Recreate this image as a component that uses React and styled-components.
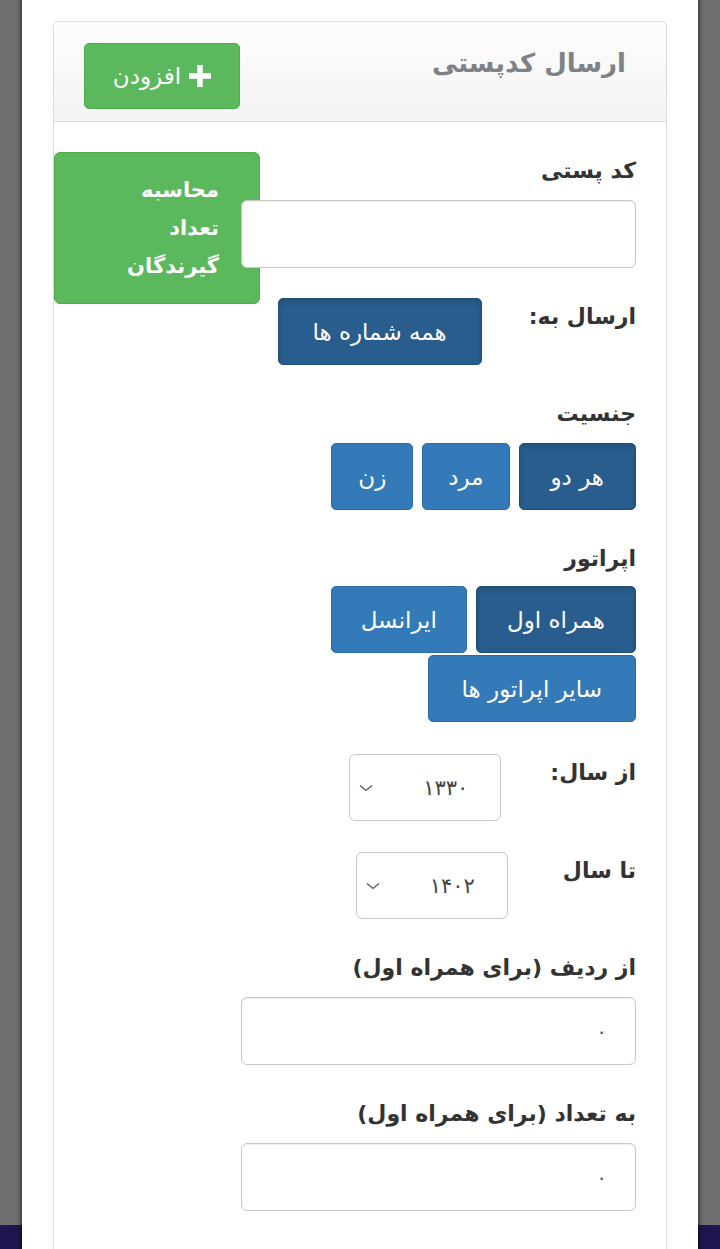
import React from "react";
import styled, { createGlobalStyle } from "styled-components";

const Global = createGlobalStyle`
  html, body { margin: 0; padding: 0; height: 1249px; overflow: hidden; }
  body {
    font-family: "DejaVu Sans", "Noto Sans", sans-serif;
    direction: rtl;
    background: linear-gradient(to bottom, #6f6f6f 0, #6f6f6f 1225px, #1f1650 1225px);
  }
  * { box-sizing: border-box; }
`;

const Backdrop = styled.div`
  height: 1249px;
  padding: 0 22px;
  display: flex;
`;

const Modal = styled.div`
  flex: 1;
  background: #fff;
  box-shadow: 0 0 4px 2px rgba(0, 0, 0, 0.45);
  padding: 21px 31px 0;
  overflow: hidden;
`;

const Panel = styled.section`
  border: 1px solid #ddd;
  border-bottom: none;
  border-radius: 5px 5px 0 0;
  min-height: 1300px;
`;

const PanelHeading = styled.header`
  height: 100px;
  display: flex;
  align-items: center;
  justify-content: space-between;
  padding: 0 40px 0 30px;
  background: linear-gradient(to bottom, #fdfdfd 0, #f4f4f4 100%);
  border-bottom: 1px solid #ddd;
  border-radius: 5px 5px 0 0;
`;

const Title = styled.h3`
  margin: 0 0 18px;
  font-size: 26px;
  font-weight: bold;
  color: #7f8285;
`;

const Btn = styled.button`
  font-family: inherit;
  direction: rtl;
  height: 67px;
  padding: 0 ${(p) => p.$px ?? 26}px;
  border-radius: 5px;
  font-size: 23px;
  color: #fff;
  cursor: pointer;
  display: inline-flex;
  align-items: center;
  justify-content: center;
  gap: 8px;
  white-space: nowrap;
  background: ${(p) => (p.$variant === "success" ? "#5cb85c" : p.$active ? "#295d8d" : "#347ab8")};
  border: 1px solid ${(p) => (p.$variant === "success" ? "#4cae4c" : p.$active ? "#204d74" : "#2e6da4")};
  box-shadow: ${(p) => (p.$active ? "inset 0 3px 5px rgba(0,0,0,0.125)" : "none")};
`;

const AddBtn = styled(Btn)`
  width: 156px;
  height: 66px;
  padding: 0;
  margin-top: 8px;
  font-size: 23px;
`;

const PanelBody = styled.div`
  position: relative;
  padding: 30px 30px 30px;
`;

const CalcBtn = styled.button`
  position: absolute;
  left: 0;
  top: 30px;
  width: 206px;
  height: 152px;
  background: #5cb85c;
  border: 1px solid #4cae4c;
  border-radius: 6px;
  color: #fff;
  font-family: inherit;
  font-weight: bold;
  font-size: 21px;
  line-height: 38px;
  text-align: right;
  padding: 0 40px 0 20px;
  direction: rtl;
  z-index: 0;
`;

const Group = styled.div`
  margin-bottom: ${(p) => p.$mb ?? 30}px;
  position: relative;
  z-index: 1;
`;

const Label = styled.label`
  display: block;
  font-weight: bold;
  font-size: 22px;
  line-height: 38px;
  color: #333;
  margin-bottom: ${(p) => p.$mb ?? 10}px;
`;

const TextInput = styled.input`
  display: block;
  width: 395px;
  height: 68px;
  border: 1.5px solid #c8c8c8;
  border-radius: 6px;
  background: #fff;
  box-shadow: inset 0 1px 1px rgba(0, 0, 0, 0.075);
  font-family: inherit;
  font-size: 20px;
  color: #555;
  padding: 0 28px;
  direction: rtl;
  text-align: right;
  outline: none;
`;

const InlineRow = styled.div`
  display: flex;
  align-items: flex-start;
  gap: ${(p) => p.$gap ?? 50}px;
`;

const InlineLabel = styled(Label)`
  margin: 0;
  flex: none;
`;

const ButtonWrap = styled.div`
  display: flex;
  flex-wrap: wrap;
  column-gap: 9px;
  row-gap: 2px;
  max-width: 320px;
`;

const SelectBox = styled.div`
  position: relative;
  width: 152px;
  height: 67px;
`;

const Select = styled.select`
  appearance: none;
  -webkit-appearance: none;
  width: 100%;
  height: 100%;
  border: 1.5px solid #c8c8c8;
  border-radius: 6px;
  background: #fff;
  font-family: inherit;
  font-size: 21px;
  color: #444;
  padding: 0 32px 0 40px;
  direction: rtl;
  outline: none;
`;

const Chevron = styled.svg`
  position: absolute;
  left: 9px;
  top: 50%;
  transform: translateY(-50%);
  pointer-events: none;
`;

function YearSelect({ value }) {
  return (
    <SelectBox>
      <Select defaultValue={value}>
        <option value={value}>{value}</option>
      </Select>
      <Chevron width="16" height="10" viewBox="0 0 16 10">
        <path d="M2 2.5 L8 7.5 L14 2.5" fill="none" stroke="#555" strokeWidth="1.3" />
      </Chevron>
    </SelectBox>
  );
}

function PlusIcon() {
  return (
    <svg width="22" height="22" viewBox="0 0 22 22">
      <rect x="8.25" y="0" width="5.5" height="22" fill="#fff" />
      <rect x="0" y="8.25" width="22" height="5.5" fill="#fff" />
    </svg>
  );
}

export default function App() {
  return (
    <>
      <Global />
      <Backdrop>
        <Modal>
          <Panel>
            <PanelHeading>
              <Title>ارسال کدپستی</Title>
              <AddBtn $variant="success">
                <PlusIcon />
                <span>افزودن</span>
              </AddBtn>
            </PanelHeading>
            <PanelBody>
              <CalcBtn>
                محاسبه
                <br />
                تعداد
                <br />
                گیرندگان
              </CalcBtn>

              <Group>
                <Label>کد پستی</Label>
                <TextInput type="text" />
              </Group>

              <Group>
                <InlineRow $gap={47}>
                  <InlineLabel>ارسال به:</InlineLabel>
                  <Btn $active $px={34}>همه شماره ها</Btn>
                </InlineRow>
              </Group>

              <Group>
                <Label>جنسیت</Label>
                <ButtonWrap>
                  <Btn $active $px={31}>هر دو</Btn>
                  <Btn $px={25}>مرد</Btn>
                  <Btn $px={26}>زن</Btn>
                </ButtonWrap>
              </Group>

              <Group $mb={32}>
                <Label $mb={8}>اپراتور</Label>
                <ButtonWrap>
                  <Btn $active $px={30}>همراه اول</Btn>
                  <Btn $px={29}>ایرانسل</Btn>
                  <Btn $px={33}>سایر اپراتور ها</Btn>
                </ButtonWrap>
              </Group>

              <Group $mb={31}>
                <InlineRow $gap={49}>
                  <InlineLabel>از سال:</InlineLabel>
                  <YearSelect value="۱۳۳۰" />
                </InlineRow>
              </Group>

              <Group>
                <InlineRow $gap={55}>
                  <InlineLabel>تا سال</InlineLabel>
                  <YearSelect value="۱۴۰۲" />
                </InlineRow>
              </Group>

              <Group>
                <Label>از ردیف (برای همراه اول)</Label>
                <TextInput type="text" defaultValue="۰" />
              </Group>

              <Group>
                <Label>به تعداد (برای همراه اول)</Label>
                <TextInput type="text" defaultValue="۰" />
              </Group>
            </PanelBody>
          </Panel>
        </Modal>
      </Backdrop>
    </>
  );
}
